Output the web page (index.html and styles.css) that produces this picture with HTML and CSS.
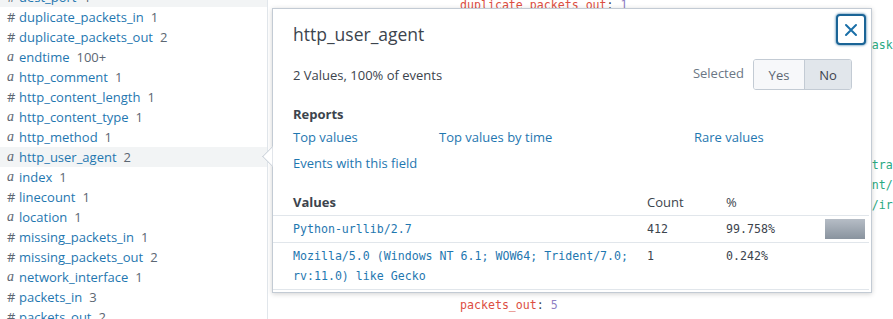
FILE: index.html
```html
<!DOCTYPE html>
<html lang="en">
<head>
    <meta charset="UTF-8">
    <title>Fields</title>
    <link rel="stylesheet" href="styles.css">
</head>
<body>
    <div class="page">
        <!-- field list -->
        <ul class="fields">
            <li class="field hover"><span class="type">#</span><span class="name">dest_port</span><span class="count">1</span></li>
            <li class="field"><span class="type">#</span><span class="name">duplicate_packets_in</span><span class="count">1</span></li>
            <li class="field"><span class="type">#</span><span class="name">duplicate_packets_out</span><span class="count">2</span></li>
            <li class="field"><span class="type alpha">a</span><span class="name">endtime</span><span class="count">100+</span></li>
            <li class="field"><span class="type alpha">a</span><span class="name">http_comment</span><span class="count">1</span></li>
            <li class="field"><span class="type">#</span><span class="name">http_content_length</span><span class="count">1</span></li>
            <li class="field"><span class="type alpha">a</span><span class="name">http_content_type</span><span class="count">1</span></li>
            <li class="field"><span class="type alpha">a</span><span class="name">http_method</span><span class="count">1</span></li>
            <li class="field active"><span class="type alpha">a</span><span class="name">http_user_agent</span><span class="count">2</span></li>
            <li class="field"><span class="type alpha">a</span><span class="name">index</span><span class="count">1</span></li>
            <li class="field"><span class="type">#</span><span class="name">linecount</span><span class="count">1</span></li>
            <li class="field"><span class="type alpha">a</span><span class="name">location</span><span class="count">1</span></li>
            <li class="field"><span class="type">#</span><span class="name">missing_packets_in</span><span class="count">1</span></li>
            <li class="field"><span class="type">#</span><span class="name">missing_packets_out</span><span class="count">2</span></li>
            <li class="field"><span class="type alpha">a</span><span class="name">network_interface</span><span class="count">1</span></li>
            <li class="field"><span class="type">#</span><span class="name">packets_in</span><span class="count">3</span></li>
            <li class="field"><span class="type">#</span><span class="name">packets_out</span><span class="count">2</span></li>
        </ul>

        <!-- raw events behind the popover -->
        <div class="events">
            <div class="line"><span class="key">duplicate_packets_out</span>: <span class="num">1</span></div>
            <div class="line">&nbsp;</div>
            <div class="line"><span class="str">http://10.0.0.5/admin/index.php?page=settings&amp;action=save&amp;mask=255</span></div>
            <div class="line">&nbsp;</div>
            <div class="line">&nbsp;</div>
            <div class="line">&nbsp;</div>
            <div class="line">&nbsp;</div>
            <div class="line">&nbsp;</div>
            <div class="line"><span class="str">Mozilla/4.0 (compatible; MSIE 8.0; user=admin; role=Administrator</span></div>
            <div class="line"><span class="str">GET /images/logo.png HTTP/1.1 Host: 10.0.0.5 Via: proxy agent/1.1</span></div>
            <div class="line"><span class="str">uri_path: /cgi-bin/test.cgi?q=1&amp;ref=http://10.0.0.5/statics/irc</span></div>
            <div class="line">&nbsp;</div>
            <div class="line">&nbsp;</div>
            <div class="line">&nbsp;</div>
            <div class="line">&nbsp;</div>
            <div class="line"><span class="key">packets_out</span>: <span class="num">5</span></div>
        </div>

        <!-- field summary popover -->
        <div class="popover">
            <span class="arrow"></span>
            <button class="close" aria-label="Close">
                <svg width="14" height="14" viewBox="0 0 14 14"><path d="M2 2 L12 12 M12 2 L2 12" stroke="#1a6fa8" stroke-width="2" stroke-linecap="round"/></svg>
            </button>
            <h3 class="pop-title">http_user_agent</h3>
            <div class="summary">
                <span>2 Values, 100% of events</span>
                <div class="selected">
                    <span class="sel-label">Selected</span>
                    <div class="toggle">
                        <span class="opt">Yes</span>
                        <span class="opt on">No</span>
                    </div>
                </div>
            </div>
            <div class="reports-title">Reports</div>
            <div class="reports">
                <a href="#">Top values</a>
                <a href="#">Top values by time</a>
                <a href="#">Rare values</a>
                <a href="#">Events with this field</a>
            </div>
            <div class="values">
                <div class="vrow head">
                    <span class="vcell first bold">Values</span>
                    <span class="vcell">Count</span>
                    <span class="vcell">%</span>
                    <span class="vcell"></span>
                </div>
                <div class="vrow">
                    <span class="vcell first mono link">Python-urllib/2.7</span>
                    <span class="vcell mono">412</span>
                    <span class="vcell mono">99.758%</span>
                    <span class="vcell"><span class="bar" style="width: 40px"></span></span>
                </div>
                <div class="vrow">
                    <span class="vcell first mono link">Mozilla/5.0 (Windows NT 6.1; WOW64; Trident/7.0; rv:11.0) like Gecko</span>
                    <span class="vcell mono">1</span>
                    <span class="vcell mono">0.242%</span>
                    <span class="vcell"></span>
                </div>
            </div>
        </div>
    </div>
</body>
</html>
```

FILE: styles.css
```css
body {
    margin: 0;
    background: #fff;
    font-family: "Open Sans", Arial, sans-serif;
    font-size: 13px;
    color: #3c444d;
    overflow: hidden;
}
.page {
    display: flex;
    position: relative;
    height: 319px;
    overflow: hidden;
}
/* Field list */
.fields {
    list-style: none;
    margin: -13px 0 0;
    padding: 0;
    width: 267px;
    flex: none;
    border-right: 1px solid #e1e6eb;
}
.field {
    display: flex;
    align-items: center;
    height: 20px;
    padding-left: 7px;
    white-space: nowrap;
}
.field.hover,
.field.active {
    background: #f2f4f5;
}
.type {
    width: 12px;
    color: #5c6773;
}
.type.alpha {
    font-family: "Liberation Serif", serif;
    font-style: italic;
    font-size: 14px;
}
.name {
    color: #1f77b0;
}
.count {
    margin-left: 7px;
    color: #5c6773;
}
/* Raw events */
.events {
    flex: 1;
    margin-top: -5px;
    padding-left: 192px;
    font-family: "DejaVu Sans Mono", monospace;
    font-size: 11.6px;
    line-height: 20px;
    white-space: nowrap;
    overflow: hidden;
}
.key { color: #dc4e41; }
.num { color: #8f7fc4; }
.str { color: #2aa982; }
/* Popover */
.popover {
    position: absolute;
    left: 272px;
    top: 8px;
    width: 598px;
    height: 283px;
    background: #fff;
    border: 1px solid #c3cbd4;
    box-shadow: 0 1px 5px rgba(0, 0, 0, 0.18);
}
.arrow {
    position: absolute;
    left: -8px;
    top: 140px;
    width: 14px;
    height: 14px;
    background: #fff;
    border-left: 1px solid #c3cbd4;
    border-bottom: 1px solid #c3cbd4;
    transform: rotate(45deg);
    clip-path: polygon(0 0, 100% 100%, 0 100%);
}
.close {
    position: absolute;
    right: 5px;
    top: 5px;
    width: 30px;
    height: 31px;
    padding: 0;
    display: flex;
    align-items: center;
    justify-content: center;
    background: #fff;
    border: 2px solid #1a6496;
    border-radius: 4px;
    box-shadow: 0 0 2px 1px rgba(26, 100, 150, 0.45);
}
.pop-title {
    margin: 0;
    padding: 13px 20px 0;
    font-size: 17.5px;
    font-weight: 400;
    line-height: 24px;
    color: #3c444d;
}
.summary {
    display: flex;
    justify-content: space-between;
    align-items: center;
    margin-top: 13px;
    padding: 0 19px 0 20px;
    height: 31px;
}
.selected {
    display: flex;
    align-items: center;
}
.sel-label {
    color: #6b7785;
    margin-right: 9px;
    margin-top: -3px;
}
.toggle {
    display: flex;
    border: 1px solid #c3cbd4;
    border-radius: 3px;
    height: 29px;
    overflow: hidden;
}
.opt {
    display: flex;
    align-items: center;
    justify-content: center;
    width: 50px;
    background: #f7f8fa;
    color: #5c6773;
}
.opt.on {
    width: 46px;
    background: #e1e6eb;
    color: #3c444d;
    border-left: 1px solid #c3cbd4;
}
.reports-title {
    margin-top: 14px;
    padding-left: 20px;
    font-weight: 700;
    line-height: 20px;
}
.reports {
    display: grid;
    grid-template-columns: 146px 255px auto;
    padding-left: 20px;
    line-height: 26px;
}
.reports a {
    color: #1f77b0;
    text-decoration: none;
}
.values {
    margin-top: 13px;
    margin-right: 2px;
}
.vrow {
    display: grid;
    grid-template-columns: 374px 79px 99px 46px;
    border-bottom: 1px solid #e1e6eb;
    padding: 3px 0;
    line-height: 20px;
}
.vcell.first {
    padding-left: 20px;
    padding-right: 12px;
}
.bold {
    font-weight: 700;
}
.mono {
    font-family: "DejaVu Sans Mono", monospace;
    font-size: 11.6px;
    color: #3c444d;
}
.mono.link {
    color: #1f77b0;
}
.bar {
    display: block;
    height: 20px;
    background: linear-gradient(#b6bdc6, #89939e);
}
```
